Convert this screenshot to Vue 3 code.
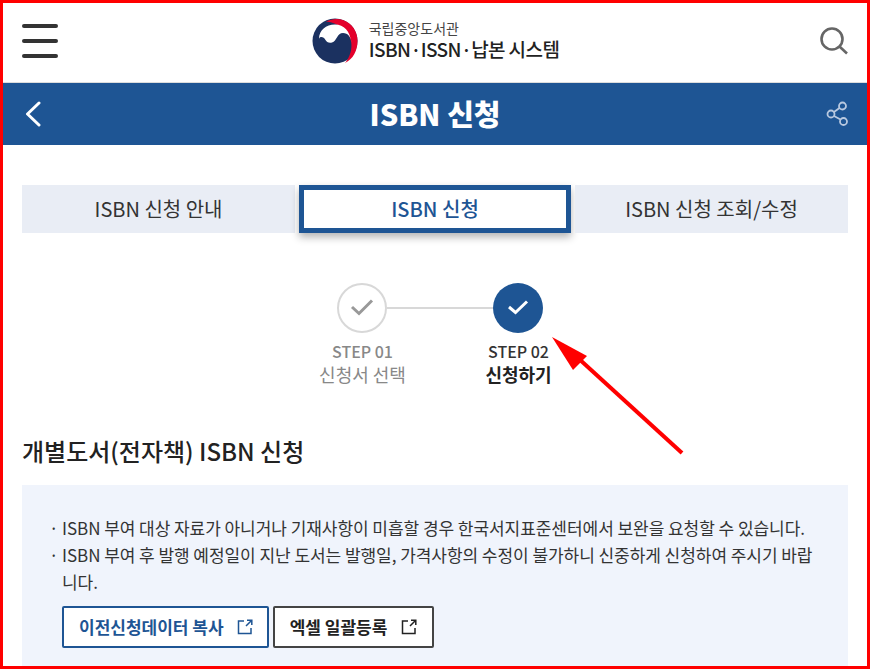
<script setup>
const tabs = [
  { label: "ISBN 신청 안내", active: false },
  { label: "ISBN 신청", active: true },
  { label: "ISBN 신청 조회/수정", active: false }
];

const notices = [
  "ISBN 부여 대상 자료가 아니거나 기재사항이 미흡할 경우 한국서지표준센터에서 보완을 요청할 수 있습니다.",
  "ISBN 부여 후 발행 예정일이 지난 도서는 발행일, 가격사항의 수정이 불가하니 신중하게 신청하여 주시기 바랍니다."
];
</script>

<template>
  <div class="page">
    <header class="top">
      <button class="menu" type="button" aria-label="menu"><i></i><i></i><i></i></button>
      <div class="brand">
        <svg class="logo" viewBox="0 0 46 46" width="46" height="46">
          <circle cx="23" cy="23" r="22.500" fill="#1b3160" />
          <path d="M14 3.500C19 .8 26 0 31 2C40 5.500 45.500 13 45.500 23C45.500 33 41 41 33 45C38 39 40.500 31 39 23C37 13 27 5 14 3.500Z" fill="#e4002b" />
          <path d="M7 21C7 12 14 6.500 23 6.500C32 6.500 38 13 39.500 25C39 19 36 15 31 15C25 15 25 23 20 24.500C17 25.500 14.500 24 13.500 22C12 19 8 17.500 7 21Z" fill="#fff" />
        </svg>
        <div class="brand-text">
          <span class="brand-sub">국립중앙도서관</span>
          <strong class="brand-name">ISBN·ISSN·납본 시스템</strong>
        </div>
      </div>
      <button class="search" type="button" aria-label="search">
        <svg viewBox="0 0 28 28" width="28" height="28" fill="none" stroke="#666" stroke-width="2.600">
          <circle cx="12" cy="12" r="10.500" />
          <path d="M19.500 19.500L27 26.500" />
        </svg>
      </button>
    </header>

    <div class="titlebar">
      <svg class="back" viewBox="0 0 16 26" width="16" height="26" fill="none" stroke="#fff" stroke-width="3" stroke-linecap="round" stroke-linejoin="round">
        <path d="M14 2L2.500 13L14 24" />
      </svg>
      <h1>ISBN 신청</h1>
      <svg class="share" viewBox="0 0 24 26" width="24" height="26" fill="none" stroke="#b9c9e0" stroke-width="1.800">
        <circle cx="18.500" cy="5" r="3.500" />
        <circle cx="7" cy="13" r="3.500" />
        <circle cx="19.500" cy="20.500" r="3.500" />
        <path d="M15.500 7L10 11M10 15L16.500 18.500" />
      </svg>
    </div>

    <main class="content">
      <nav class="tabs">
        <a v-for="tab in tabs" :key="tab.label" :class="['tab', { active: tab.active }]">{{ tab.label }}</a>
      </nav>

      <div class="steps">
        <div class="step done">
          <span class="dot">
            <svg viewBox="0 0 24 18" width="24" height="18" fill="none" stroke="#999" stroke-width="3"><path d="M2 9L9 15.500L22 2.500" /></svg>
          </span>
          <b>STEP 01</b>
          <span class="step-name">신청서 선택</span>
        </div>
        <div class="step current">
          <span class="dot">
            <svg viewBox="0 0 24 18" width="24" height="18" fill="none" stroke="#fff" stroke-width="3"><path d="M3 9L9.500 14.500L21 3.500" /></svg>
          </span>
          <b>STEP 02</b>
          <span class="step-name">신청하기</span>
        </div>
      </div>

      <h2>개별도서(전자책) ISBN 신청</h2>

      <section class="notice">
        <ul>
          <li v-for="text in notices" :key="text">{{ text }}</li>
        </ul>
        <div class="actions">
          <a class="btn blue">
            이전신청데이터 복사
            <svg viewBox="0 0 16 16" width="16" height="16" fill="none" stroke="currentColor" stroke-width="1.500"><path d="M7 2H1.500V14.500H14V9M9 7L14.500 1.500M10 1.200H14.800V6" /></svg>
          </a>
          <a class="btn dark">
            엑셀 일괄등록
            <svg viewBox="0 0 16 16" width="16" height="16" fill="none" stroke="currentColor" stroke-width="1.500"><path d="M7 2H1.500V14.500H14V9M9 7L14.500 1.500M10 1.200H14.800V6" /></svg>
          </a>
        </div>
      </section>
    </main>

    <svg class="arrow" viewBox="0 0 870 669" width="870" height="669">
      <path d="M682 453L578 358" stroke="#f00" stroke-width="4" fill="none" />
      <path d="M552 337L587 356L573 370Z" fill="#f00" />
    </svg>
    <div class="frame"></div>
  </div>
</template>

<style>
html, body {
  margin: 0;
  background: #fff;
}
</style>

<style scoped>
.page {
  position: relative;
  width: 870px;
  height: 669px;
  overflow: hidden;
  background: #fff;
  font-family: "Noto Sans CJK KR", "Noto Sans", sans-serif;
  color: #222;
}

.top {
  height: 82px;
  border-bottom: 1px solid #ddd;
  display: flex;
  align-items: center;
  justify-content: space-between;
  padding: 0 22px;
}

.menu {
  display: flex;
  flex-direction: column;
  gap: 11px;
  width: 36px;
  padding: 0;
  border: 0;
  background: none;
}

.menu i {
  display: block;
  height: 4px;
  border-radius: 2px;
  background: #333;
}

.brand {
  display: flex;
  align-items: center;
  gap: 11px;
  margin-right: 7px;
}

.logo {
  display: block;
}

.brand-text {
  display: flex;
  flex-direction: column;
  margin-top: -3px;
}

.brand-sub {
  font-size: 14px;
  line-height: 19px;
  color: #444;
}

.brand-name {
  font-size: 19px;
  line-height: 22px;
  font-weight: 500;
  letter-spacing: -0.6px;
  color: #222;
}

.search {
  padding: 0;
  border: 0;
  background: none;
  display: flex;
}

.titlebar {
  height: 62px;
  background: #1e5594;
  display: flex;
  align-items: center;
  justify-content: space-between;
  padding: 0 22px 0 25px;
}

.titlebar h1 {
  margin: 0 0 3px 5px;
  font-size: 29px;
  font-weight: 900;
  color: #fff;
}

.content {
  padding: 40px 22px 0;
}

.tabs {
  display: grid;
  grid-template-columns: 273px 272px 273px;
  gap: 4px;
}

.tab {
  height: 48px;
  background: #e9edf5;
  display: flex;
  align-items: center;
  justify-content: center;
  font-size: 20px;
  padding-bottom: 1px;
  color: #333;
  box-sizing: border-box;
}

.tab.active {
  background: #fff;
  border: 5px solid #1e5594;
  color: #1e5594;
  font-weight: 500;
  box-shadow: 0 4px 8px rgba(0, 0, 0, 0.3);
}

.steps {
  display: flex;
  justify-content: center;
  margin-top: 50px;
  margin-left: 9px;
  gap: 50px;
}

.step {
  width: 106px;
  display: flex;
  flex-direction: column;
  align-items: center;
  position: relative;
  font-size: 16px;
}

.step b {
  font-weight: 500;
  line-height: 22px;
  margin: 7px 0 0 2px;
}

.step-name {
  font-size: 18px;
  line-height: 24px;
  margin-left: 2px;
}

.dot {
  width: 50px;
  height: 50px;
  border-radius: 50%;
  box-sizing: border-box;
  display: flex;
  align-items: center;
  justify-content: center;
  background: #fff;
  position: relative;
  z-index: 1;
}

.dot svg {
  margin-bottom: 2px;
}

.done .dot {
  border: 2px solid #d8d8d8;
}

.done::after {
  content: "";
  position: absolute;
  left: 78px;
  top: 24px;
  width: 110px;
  height: 2px;
  background: #d8d8d8;
}

.done b,
.done .step-name {
  color: #888;
}

.current .dot {
  background: #1e5594;
}

.current b {
  color: #333;
}

.current .step-name {
  color: #222;
  font-weight: 700;
}

h2 {
  margin: 47px 0 0;
  font-size: 24px;
  line-height: 36px;
  font-weight: 500;
  color: #222;
}

.notice {
  margin-top: 16px;
  height: 200px;
  background: #f0f4fc;
  padding: 29px 30px 0;
  box-sizing: border-box;
}

.notice ul {
  margin: 0;
  padding: 0;
  list-style: none;
}

.notice li {
  position: relative;
  padding-left: 10px;
  font-size: 17px;
  line-height: 27px;
  letter-spacing: -0.05px;
  color: #333;
}

.notice li::before {
  content: "·";
  position: absolute;
  left: -3px;
}

.actions {
  display: flex;
  gap: 4px;
  margin-top: 11px;
  margin-left: 10px;
}

.btn {
  height: 42px;
  box-sizing: border-box;
  border: 2px solid;
  border-radius: 2px;
  background: #fff;
  display: flex;
  align-items: center;
  padding: 0 14px 2px 15px;
  gap: 13px;
  font-size: 17px;
  font-weight: 700;
}

.btn svg {
  margin-top: 2px;
}

.btn.blue {
  color: #1e5594;
  border-color: #1e5594;
}

.btn.dark {
  color: #222;
  border-color: #444;
  padding-right: 15px;
  gap: 14px;
}

.arrow {
  position: absolute;
  left: 0;
  top: 0;
  pointer-events: none;
}

.frame {
  position: absolute;
  inset: 0;
  border: 3px solid #f00;
  pointer-events: none;
}
</style>
